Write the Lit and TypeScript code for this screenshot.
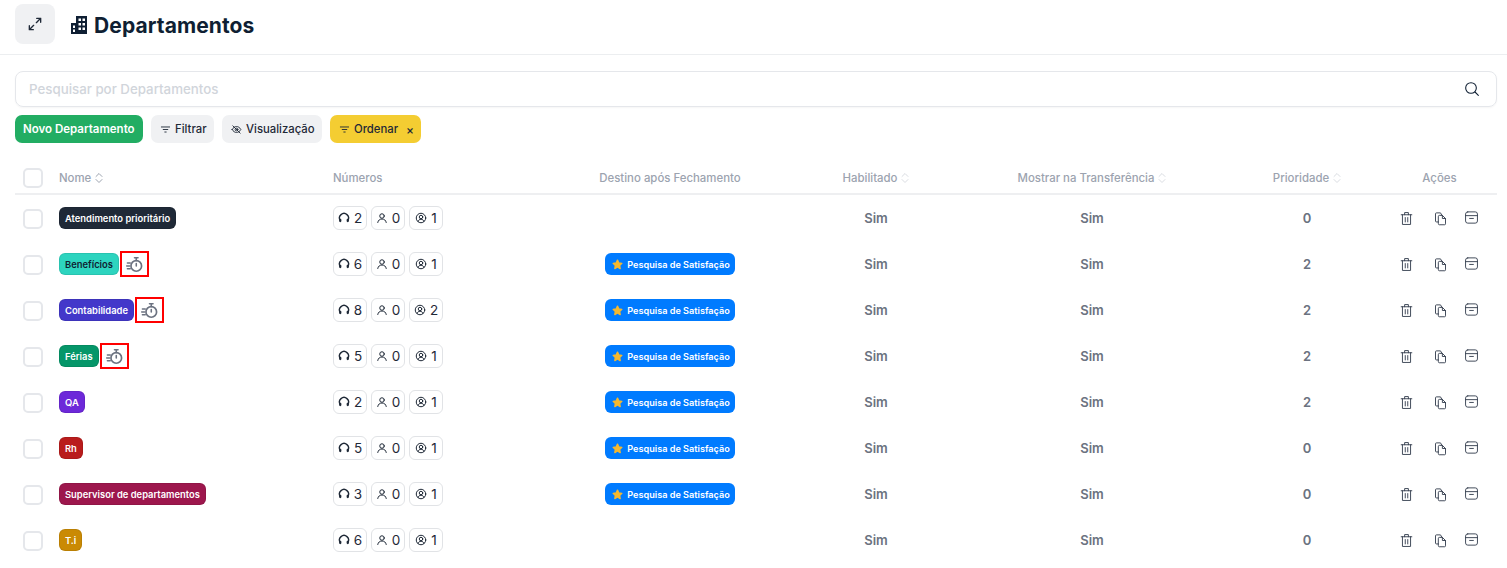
import { LitElement, css, html, svg } from 'lit'
import { customElement } from 'lit/decorators.js'

interface Dept {
   name: string
   color: string
   dark?: boolean
   timer?: boolean
   nums: [number, number, number]
   survey: boolean
   priority: number
}

const depts: Dept[] = [
   { name: 'Atendimento prioritário', color: '#1f2937', nums: [2, 0, 1], survey: false, priority: 0 },
   { name: 'Benefícios', color: '#2dd4bf', dark: true, timer: true, nums: [6, 0, 1], survey: true, priority: 2 },
   { name: 'Contabilidade', color: '#4338ca', timer: true, nums: [8, 0, 2], survey: true, priority: 2 },
   { name: 'Férias', color: '#059669', timer: true, nums: [5, 0, 1], survey: true, priority: 2 },
   { name: 'QA', color: '#6d28d9', nums: [2, 0, 1], survey: true, priority: 2 },
   { name: 'Rh', color: '#b91c1c', nums: [5, 0, 1], survey: true, priority: 0 },
   { name: 'Supervisor de departamentos', color: '#9d174d', nums: [3, 0, 1], survey: true, priority: 0 },
   { name: 'T.i', color: '#ca8a04', nums: [6, 0, 1], survey: false, priority: 0 },
]

const icon = (size: number, body: unknown, sw = 1.5) => html`
   <svg width=${size} height=${size} viewBox="0 0 24 24" fill="none" stroke="currentColor"
      stroke-width=${sw} stroke-linecap="round" stroke-linejoin="round">${body}</svg>`

const expandIcon = svg`<path d="M14 10l6.500-6.500M14.500 3.500h6v6M10 14l-6.500 6.500M3.500 14.500v6h6"/>`
const searchIcon = svg`<circle cx="10.500" cy="10.500" r="8"/><path d="M16.500 16.500l5 5"/>`
const filterIcon = svg`<path d="M3 6.500h18M7 12h10M10.500 17.500h3"/>`
const eyeOffIcon = svg`<path d="M2.500 12C5 7.500 8.500 5.500 12 5.500s7 2 9.500 6.500c-2.500 4.500-6 6.500-9.500 6.500S5 16.500 2.500 12z"/><circle cx="12" cy="12" r="3"/><path d="M4 4l16 16"/>`
const headsetIcon = svg`<path d="M4.500 17A9 9 0 1 1 19.500 17" stroke-width="2.800"/><path d="M4.500 15.500v2.500M19.500 15.500v2.500" stroke-width="4.500"/>`
const userIcon = svg`<circle cx="12" cy="8" r="4.500"/><path d="M3.500 21c.8-4.500 4-7 8.500-7s7.700 2.500 8.500 7"/>`
const userCircleIcon = svg`<circle cx="12" cy="12" r="9.500"/><circle cx="12" cy="10" r="3.500"/><path d="M6 19c1-3 3.200-4.500 6-4.500s5 1.500 6 4.500"/>`
const trashIcon = svg`<path d="M3.500 6h17M9 6V2.500h6V6M5.500 6v15.500h13V6M10 10.500v7M14 10.500v7"/>`
const copyIcon = svg`<path d="M8.500 17.500H5.500A1.500 1.500 0 0 1 4 16V4.500A1.500 1.500 0 0 1 5.500 3H12l2 3.500"/><path d="M8.500 8.500A1.500 1.500 0 0 1 10 7h5l5 5v8.500a1.500 1.500 0 0 1-1.500 1.500H10a1.500 1.500 0 0 1-1.500-1.500zM15 7v5h5"/>`
const archiveIcon = svg`<rect x="2.500" y="3" width="19" height="18" rx="3.500"/><path d="M2.500 9h19M9 13.500h6"/>`
const timerIcon = svg`<circle cx="14.500" cy="14" r="7.500" stroke-width="2.400"/><path d="M14.500 10.500V14M12 2.500h5M14.500 2.500v4M2 10h4M1 14h4M2 18h4" stroke-width="2.200"/>`

const sortIcon = (active = false) => html`
   <svg class="sort ${active ? 'active' : ''}" width="8" height="12" viewBox="0 0 8 12" fill="none"
      stroke="currentColor" stroke-width="1" stroke-linecap="round" stroke-linejoin="round">
      <path d="M1 4.500L4 1.500l3 3M1 7.500l3 3 3-3"/>
   </svg>`

const star = html`
   <svg width="11" height="11" viewBox="0 0 24 24" fill="#f5b82e" stroke="#f5b82e" stroke-width="3" stroke-linejoin="round">
      <path d="M12 2.500l2.900 6.200 6.600.8-4.900 4.600 1.300 6.700-5.900-3.300-5.900 3.300 1.300-6.700-4.900-4.600 6.600-.8z"/>
   </svg>`

@customElement('app-root')
export class AppRoot extends LitElement {

   renderRow(d: Dept) {
      return html`
         <div class="row">
            <div class="cell"><span class="check low"></span></div>
            <div class="cell name">
               <span class="tag ${d.dark ? 'dark' : ''}" style="background:${d.color}">${d.name}</span>
               ${d.timer ? html`<span class="timer">${icon(17, timerIcon)}</span>` : ''}
            </div>
            <div class="cell nums">
               <span class="chip">${icon(12, headsetIcon, 2)}${d.nums[0]}</span>
               <span class="chip">${icon(12, userIcon, 2)}${d.nums[1]}</span>
               <span class="chip">${icon(12, userCircleIcon, 2)}${d.nums[2]}</span>
            </div>
            <div class="cell center">
               ${d.survey ? html`<span class="survey">${star}Pesquisa de Satisfação</span>` : ''}
            </div>
            <div class="cell center value">Sim</div>
            <div class="cell center value">Sim</div>
            <div class="cell center value">${d.priority}</div>
            <div class="cell actions">
               ${icon(15, trashIcon)}${icon(15, copyIcon)}<span class="raised">${icon(15, archiveIcon)}</span>
            </div>
         </div>`
   }

   render() {
      return html`
         <header class="top">
            <button class="expand">${icon(16, expandIcon, 2)}</button>
            <svg class="building" width="18" height="20" viewBox="0 0 18 20">
               <path fill="#0f1f33" d="M6 1h11v18H1V8h5zM8.500 3.500v2.500h2.500V3.500zm4 0v2.500H15V3.500zm-4 4.500v2.500h2.500V8zm4 0v2.500H15V8zm0 4.500V15H15v-2.500zM3 10.500V13h2v-2.500zM3 14.500V17h2v-2.500zm5.500-2V15h2.500v-2.500z"/>
            </svg>
            <h1>Departamentos</h1>
         </header>
         <main>
            <label class="search">
               <input placeholder="Pesquisar por Departamentos" />
               ${icon(16, searchIcon, 1.6)}
            </label>
            <div class="toolbar">
               <button class="btn primary">Novo Departamento</button>
               <button class="btn">${icon(11, filterIcon, 2)}Filtrar</button>
               <button class="btn">${icon(11, eyeOffIcon, 2)}Visualização</button>
               <button class="btn warn">${icon(11, filterIcon, 2)}Ordenar<span class="x">×</span></button>
            </div>
            <div class="table">
               <div class="row head">
                  <div class="cell"><span class="check"></span></div>
                  <div class="cell">Nome ${sortIcon(true)}</div>
                  <div class="cell">Números</div>
                  <div class="cell center">Destino após Fechamento</div>
                  <div class="cell center">Habilitado ${sortIcon()}</div>
                  <div class="cell center">Mostrar na Transferência ${sortIcon()}</div>
                  <div class="cell center">Prioridade ${sortIcon()}</div>
                  <div class="cell center">Ações</div>
               </div>
               ${depts.map(d => this.renderRow(d))}
            </div>
         </main>
      `
   }

   static styles = css`
   :host {
      display: block;
      font-family: Inter, sans-serif;
      color: #0f1f33;
      background: #fff;
   }
   .top {
      display: flex;
      align-items: center;
      height: 55px;
      box-sizing: border-box;
      padding: 0 15px 6px;
      border-bottom: 1px solid #eceef0;
   }
   .expand {
      width: 40px;
      height: 40px;
      display: flex;
      align-items: center;
      justify-content: center;
      border: 0;
      border-radius: 8px;
      background: #f0f1f3;
      color: #1f2937;
      padding: 0;
   }
   .building { margin: 2px 0 0 15px; }
   h1 {
      margin: 3px 0 0 6px;
      font-size: 21px;
      font-weight: 700;
      line-height: 28px;
      letter-spacing: 0.1px;
   }
   main { padding: 16px 10px 0 15px; }
   .search {
      display: flex;
      align-items: center;
      height: 36px;
      box-sizing: border-box;
      padding: 0 16px 0 13px;
      border: 1px solid #e5e7eb;
      border-radius: 8px;
      box-shadow: 0 1px 2px rgba(0, 0, 0, 0.04);
   }
   input {
      flex: 1;
      border: 0;
      outline: 0;
      padding: 0;
      font: 500 13.300px Inter, sans-serif;
   }
   input::placeholder { color: #d1d5db; opacity: 1; }
   .toolbar {
      display: flex;
      gap: 8px;
      margin-top: 8px;
   }
   .btn {
      display: flex;
      align-items: center;
      gap: 4.500px;
      height: 28px;
      padding: 0 7px 0 9px;
      border: 0;
      border-radius: 7px;
      background: #f0f1f3;
      color: #1f2937;
      font: 500 11.300px Inter, sans-serif;
   }
   .primary { background: #22ad63; color: #fff; font-weight: 600; font-size: 11.500px; padding: 0 8px; }
   .warn { background: #f4cd32; }
   .x { margin-left: 3.500px; font-size: 12px; }
   .table { margin-top: 19px; }
   .row {
      display: grid;
      grid-template-columns: 36px 274px 215px 260px 152px 280px 150px 115px;
      height: 46px;
   }
   .head {
      height: 31px;
      border-bottom: 2px solid #eeeff1;
      color: #9ca3af;
      font-size: 11.400px;
      font-weight: 500;
   }
   .cell {
      display: flex;
      align-items: center;
      gap: 4px;
      padding-left: 8px;
      min-width: 0;
   }
   .center { justify-content: center; padding-left: 0; }
   .check {
      width: 20px;
      height: 20px;
      box-sizing: border-box;
      border: 2px solid #e5e7eb;
      border-radius: 5px;
   }
   .check.low { margin-top: 2px; }
   .sort { color: #d9dce1; }
   .sort.active { color: #9ca3af; }
   .name { gap: 1px; }
   .tag {
      height: 22px;
      box-sizing: border-box;
      display: flex;
      align-items: center;
      padding: 0 5px;
      border: 1px solid rgba(0, 0, 0, 0.08);
      border-radius: 6px;
      color: #fff;
      font-size: 9.400px;
      font-weight: 600;
      white-space: nowrap;
   }
   .tag.dark { color: #0f1f33; }
   .timer {
      width: 29px;
      height: 26px;
      box-sizing: border-box;
      border: 2px solid #f00;
      display: flex;
      align-items: center;
      justify-content: center;
      color: #6b7280;
   }
   .nums { gap: 4px; }
   .chip {
      display: flex;
      align-items: center;
      justify-content: center;
      gap: 4px;
      width: 34px;
      height: 24px;
      box-sizing: border-box;
      border: 1px solid #e1e3e6;
      border-radius: 6px;
      color: #1f2937;
      font-size: 13.500px;
   }
   .survey {
      display: flex;
      align-items: center;
      gap: 4px;
      height: 22px;
      box-sizing: border-box;
      padding: 0 5px 0 7px;
      border-radius: 6px;
      background: #007bff;
      color: #fff;
      font-size: 9.150px;
      font-weight: 600;
      white-space: nowrap;
   }
   .value {
      color: #6b7280;
      font-size: 13px;
      font-weight: 600;
   }
   .actions {
      justify-content: center;
      padding: 0 2px 0 0;
      gap: 19px;
      color: #374151;
   }
   .actions svg { display: block; }
   .raised { margin: -2px 0 0 -3px; }
   `
}

declare global {
   interface HTMLElementTagNameMap {
      'app-root': AppRoot
   }
}
